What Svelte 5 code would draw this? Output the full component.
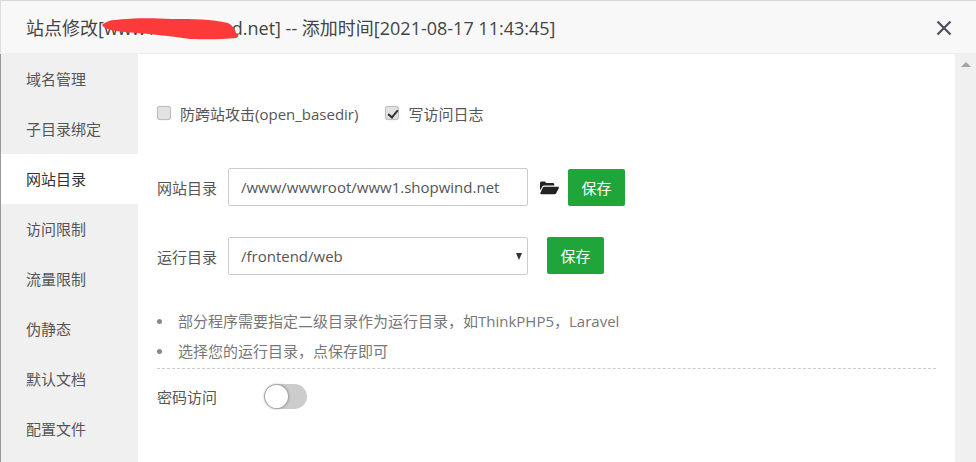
<script>
  const tabs = ['域名管理','子目录绑定','网站目录','访问限制','流量限制','伪静态','默认文档','配置文件'];
  const active = 2;
</script>

<div class="dialog">
  <header class="head">
    <div class="title">站点修改[www1.shopwind.net] -- 添加时间[2021-08-17 11:43:45]
      <svg class="scribble" width="138" height="26" viewBox="0 0 138 26"><path d="M0 9 C3 6 8 4 13 4 C30 2 48 2 70 3 C90 3 110 3 126 7 C130 9 133 13 134 17 C137 18 137 21 134 22 C115 24 100 23 88 23 C70 20 48 18 23 16 C12 15 2 13 0 9 Z" fill="#fc3a3a"/></svg>
    </div>
    <svg class="close" width="16" height="16" viewBox="0 0 16 16"><path d="M1.5 1.5 14.5 14.5M14.5 1.5 1.5 14.5" stroke="#4c4f5c" stroke-width="2.2" fill="none"/></svg>
  </header>
  <div class="body">
    <nav class="side">
      {#each tabs as t, i}
        <div class="tab" class:on={i === active}>{t}</div>
      {/each}
    </nav>
    <main class="main">
      <div class="checks">
        <label class="check"><input type="checkbox" />防跨站攻击(open_basedir)</label>
        <label class="check"><input type="checkbox" checked />写访问日志</label>
      </div>
      <div class="row first">
        <span class="lab">网站目录</span>
        <input class="field" type="text" value="/www/wwwroot/www1.shopwind.net" />
        <svg class="folder" width="19" height="15" viewBox="0 0 19 15"><path d="M0 3.2C0 2.2.7 1.5 1.6 1.5h3.2l1.5 1.6h6.4c.9 0 1.6.7 1.6 1.5v1H4.2c-.9 0-1.6.4-2 1.2L0 10.6z" fill="#222"/><path d="M4.3 6.8H18c.8 0 1.2.7.8 1.4l-2.6 5c-.4.7-1 1.1-1.8 1.1H1.2c-.8 0-1.2-.7-.8-1.4l2.2-4.9c.4-.8 1-1.2 1.7-1.2z" fill="#222"/></svg>
        <button class="save">保存</button>
      </div>
      <div class="row second">
        <span class="lab">运行目录</span>
        <div class="field select">/frontend/web<i class="caret"></i></div>
        <button class="save far">保存</button>
      </div>
      <ul class="tips">
        <li>部分程序需要指定二级目录作为运行目录，如ThinkPHP5，Laravel</li>
        <li>选择您的运行目录，点保存即可</li>
      </ul>
      <div class="pw">
        <span class="lab">密码访问</span>
        <span class="toggle"><span class="knob"></span></span>
      </div>
    </main>
    <aside class="bar"><i class="up"></i></aside>
  </div>
</div>

<style>
  :global(body) { margin: 0; background: #fff; }
  .dialog {
    width: 976px; height: 462px; box-sizing: border-box; overflow: hidden;
    display: flex; flex-direction: column;
    border-top: 1px solid #d9d9dc;
    font-family: "Open Sans", "Noto Sans CJK SC", sans-serif;
    font-size: 15px; color: #555;
  }
  .head {
    height: 53px; flex: none; box-sizing: border-box;
    background: #f8f8f8; border-bottom: 1px solid #eee;
    border-left: 1px solid #ddd;
    display: flex; align-items: center; justify-content: space-between;
    padding: 0 24px 0 25px;
  }
  .title { position: relative; font-size: 18px; color: #444; white-space: nowrap; }
  .scribble { position: absolute; left: 76px; top: 2px; }
  .close { display: block; margin-top: 2px; }
  .body { flex: 1; display: flex; min-height: 0; }
  .side {
    width: 138px; flex: none; box-sizing: border-box;
    background: #f0f0f0; border-left: 1px solid #999;
  }
  .tab { height: 50px; line-height: 50px; padding-left: 25px; color: #555; }
  .tab.on { background: #fff; color: #333; }
  .main { flex: 1; min-width: 0; padding: 0 19px; }
  .bar { width: 21px; flex: none; background: #f0f0f0; display: flex; justify-content: center; }
  .up {
    width: 0; height: 0; margin-top: 8px;
    border: 5px solid transparent; border-top: 0; border-bottom: 5px solid #a3a3a3;
  }
  .checks { display: flex; gap: 27px; margin-top: 48px; height: 22px; align-items: center; }
  .check { display: flex; align-items: center; color: #555; }
  .check input {
    appearance: none; width: 14px; height: 14px; margin: 0 9px 0 0; box-sizing: border-box;
    border: 1px solid #bdbdbd; border-radius: 3px; background: #e2e2e2; position: relative;
    box-shadow: 0 0 1px rgba(0,0,0,.25);
  }
  .check input:checked::after {
    content: ""; position: absolute; left: 3.5px; top: 0.5px; width: 4px; height: 8px;
    border: solid #333; border-width: 0 2px 2px 0; transform: rotate(40deg);
  }
  .row { display: flex; align-items: center; }
  .row.first { margin-top: 44px; }
  .row.second { margin-top: 31px; }
  .lab { width: 71px; flex: none; color: #555; }
  .field {
    width: 300px; height: 38px; box-sizing: border-box; flex: none;
    border: 1px solid #ccc; border-radius: 2px; padding: 0 12px;
    font: inherit; color: #555; background: #fff; outline: none;
  }
  .select { position: relative; line-height: 36px; }
  .caret {
    position: absolute; right: 5px; top: 15px; width: 0; height: 0;
    border: 3.5px solid transparent; border-top: 7px solid #333; border-bottom: 0;
  }
  .folder { margin-left: 12px; flex: none; }
  .save {
    width: 57px; height: 37px; margin-left: 9px; flex: none;
    background: #20a53a; color: #fff; border: 0; border-radius: 2px;
    font: inherit;
  }
  .save.far { margin-left: 19px; margin-bottom: 1px; }
  .tips { list-style: none; margin: 31px 0 0; padding: 0; color: #777; }
  .tips li { height: 30px; line-height: 30px; padding-left: 21px; position: relative; }
  .tips li::before {
    content: ""; position: absolute; left: 0; top: 13px;
    width: 5px; height: 5px; border-radius: 50%; background: #888;
  }
  .pw {
    border-top: 1px dashed #ccc; margin-top: 2px; padding-top: 11px;
    display: flex; align-items: center; height: 32px;
  }
  .pw .lab { width: 107px; }
  .toggle { width: 43px; height: 25px; border-radius: 13px; background: #ccc; position: relative; flex: none; }
  .knob {
    position: absolute; left: 1px; top: 1px; width: 23px; height: 23px;
    border-radius: 50%; background: #fff; box-shadow: 0 0 3px rgba(0,0,0,.55);
  }
</style>
